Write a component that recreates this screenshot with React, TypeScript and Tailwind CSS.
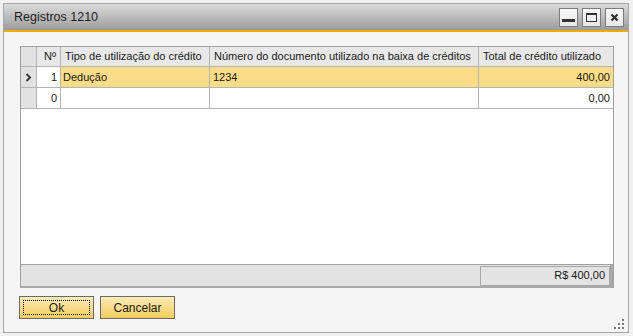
import React from "react";

const font = { fontFamily: '"Liberation Sans", Arial, sans-serif' };

const cols = [
  { key: "num", label: "Nº", w: "w-[24px]" },
  { key: "tipo", label: "Tipo de utilização do crédito", w: "w-[149px]" },
  { key: "doc", label: "Número do documento utilizado na baixa de créditos", w: "w-[269px]" },
  { key: "total", label: "Total de crédito utilizado", w: "flex-1" },
];

const rows = [
  { num: "1", tipo: "Dedução", doc: "1234", total: "400,00", active: true },
  { num: "0", tipo: "", doc: "", total: "0,00", active: false },
];

const TitleButton = ({ children }: { children: React.ReactNode }) => (
  <div className="w-[19px] h-[19px] border border-[#7c7c7c] bg-gradient-to-b from-[#fafafa] to-[#e6e6e6] flex items-center justify-center">
    {children}
  </div>
);

const Chevron = () => (
  <svg width="7" height="9" viewBox="0 0 7 9">
    <path d="M1.5 1 L5 4.5 L1.5 8" stroke="#3a3a3a" strokeWidth="2" fill="none" />
  </svg>
);

export default function App() {
  return (
    <div className="w-[633px] h-[336px] bg-[#f0f0f0] pt-[3px] pl-[3px] pr-[4px] pb-[3px]" style={font}>
      <div className="relative w-full h-full border border-[#a6a6a6] bg-[#f5f5f5] flex flex-col">
        {/* title bar */}
        <div className="h-[26px] bg-gradient-to-b from-[#dcdcdc] to-[#9c9c9c] flex items-center pl-[10px] pr-[4px]">
          <span className="text-[12.5px] text-[#1e1e1e] flex-1">Registros 1210</span>
          <div className="flex gap-[4px] mt-[1px]">
            <TitleButton>
              <div className="w-[13px] h-[3px] bg-[#333] mt-[5px]" />
            </TitleButton>
            <TitleButton>
              <div className="w-[11px] h-[9px] border border-[#333] border-t-[2px]" />
            </TitleButton>
            <TitleButton>
              <svg width="9" height="9" viewBox="0 0 9 9">
                <path d="M1.5 1.5 L7.5 7.5 M7.5 1.5 L1.5 7.5" stroke="#333" strokeWidth="2.2" />
              </svg>
            </TitleButton>
          </div>
        </div>
        <div className="h-[2px] bg-[#f5ab00]" />

        {/* body */}
        <div className="flex-1 flex flex-col pt-[14px] pl-[16px] pr-[14px] pb-[13px]">
          <div className="flex-1 flex flex-col border-l border-t border-r border-[#a0a0a0] bg-white text-[11px] text-[#1a1a1a]">
            {/* header */}
            <div className="flex h-[20px] border-b border-[#b4b4b4] bg-[#e8e8e8]">
              <div className="w-[16px] border-r border-[#b4b4b4] bg-[#e2e2e2]" />
              {cols.map((c) => (
                <div
                  key={c.key}
                  className={`${c.w} px-[4px] flex items-center ${c.key === "total" ? "" : "border-r border-[#b4b4b4]"} ${c.key === "num" ? "justify-end" : ""}`}
                >
                  <span className="whitespace-nowrap">{c.label}</span>
                </div>
              ))}
            </div>
            {rows.map((r) => (
              <div key={r.num} className="flex h-[21px] border-b border-[#b4b4b4]">
                <div className="w-[16px] border-r border-[#b4b4b4] bg-[#e2e2e2] flex items-center justify-center">
                  {r.active && <Chevron />}
                </div>
                <div className="w-[24px] border-r border-[#b4b4b4] bg-white flex items-center justify-end px-[3px]">
                  {r.num}
                </div>
                <div className={`w-[149px] border-r border-[#b4b4b4] flex items-center px-[2px] ${r.active ? "bg-[#fbdd88]" : "bg-white"}`}>
                  {r.tipo}
                </div>
                <div className={`w-[269px] border-r border-[#b4b4b4] flex items-center px-[3px] ${r.active ? "bg-[#fbdd88]" : "bg-white"}`}>
                  {r.doc}
                </div>
                <div className={`flex-1 flex items-center justify-end px-[3px] ${r.active ? "bg-[#fbdd88]" : "bg-white"}`}>
                  {r.total}
                </div>
              </div>
            ))}
            <div className="flex-1" />
            {/* footer */}
            <div className="h-[24px] border-t border-[#a0a0a0] bg-[#e3e3e3] border-b-[2px] border-b-[#a8a8a8] border-r-[3px] border-r-[#a8a8a8] flex items-center justify-end">
              <div className="w-[130px] h-[20px] border border-[#a8a8a8] flex items-center justify-end pr-[4px] text-[#1a1a1a]">
                R$ 400,00
              </div>
            </div>
          </div>

          {/* buttons */}
          <div className="flex gap-[6px] mt-[8px] -ml-[1px]">
            <button className="w-[75px] h-[23px] border border-[#6a6a6a] bg-gradient-to-b from-[#fcecb4] to-[#f4cc5a] p-[3px] text-[12px] text-[#1a1a1a]">
              <div className="w-full h-full border border-dotted border-black flex items-center justify-center">Ok</div>
            </button>
            <button className="w-[75px] h-[23px] border border-[#6a6a6a] bg-gradient-to-b from-[#fcecb4] to-[#f4cc5a] text-[12px] text-[#1a1a1a] flex items-center justify-center">
              Cancelar
            </button>
          </div>
        </div>

        {/* resize grip */}
        <div className="absolute right-[4px] bottom-[3px] w-[10px] h-[10px]">
          <div className="absolute right-0 top-0 w-[2px] h-[2px] bg-[#7a7a7a]" />
          <div className="absolute right-0 top-[4px] w-[2px] h-[2px] bg-[#7a7a7a]" />
          <div className="absolute right-[4px] top-[4px] w-[2px] h-[2px] bg-[#7a7a7a]" />
          <div className="absolute right-0 top-[8px] w-[2px] h-[2px] bg-[#7a7a7a]" />
          <div className="absolute right-[4px] top-[8px] w-[2px] h-[2px] bg-[#7a7a7a]" />
          <div className="absolute right-[8px] top-[8px] w-[2px] h-[2px] bg-[#7a7a7a]" />
        </div>
      </div>
    </div>
  );
}
